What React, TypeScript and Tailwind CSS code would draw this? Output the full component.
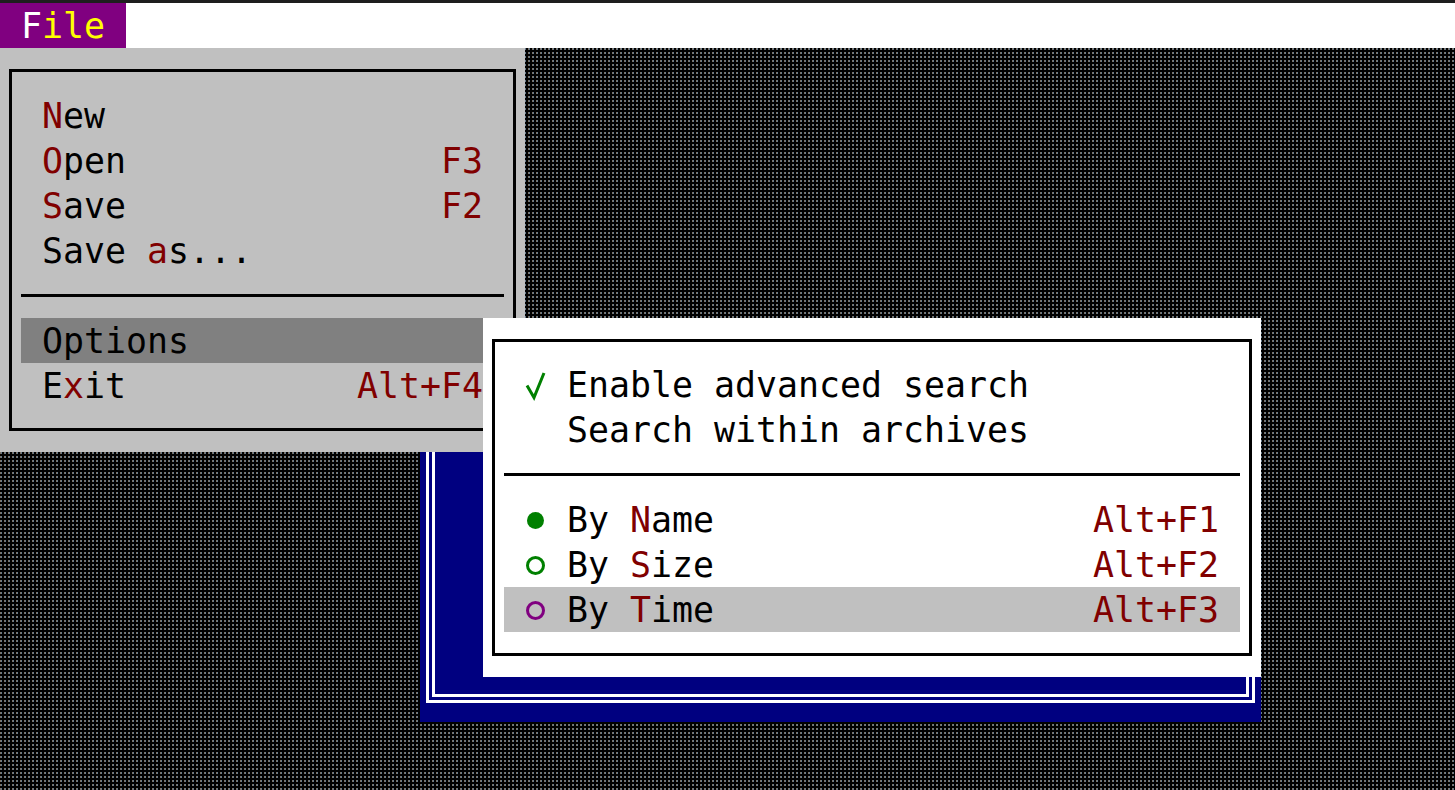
import React from "react";

const H = ({ children }: { children: React.ReactNode }) => (
  <span className="text-[#800000]">{children}</span>
);

function Row({
  children,
  right,
  className = "",
}: {
  children: React.ReactNode;
  right?: string;
  className?: string;
}) {
  return (
    <div className={"h-[45px] pt-[2px] flex items-center justify-between px-[21px] whitespace-pre " + className}>
      <span className="flex items-center">{children}</span>
      {right ? <span className="text-[#800000]">{right}</span> : null}
    </div>
  );
}

function Sep() {
  return (
    <div className="h-[45px] flex items-center">
      <div className="h-[3px] w-full bg-black" />
    </div>
  );
}

function Slot({ children }: { children?: React.ReactNode }) {
  return <span className="w-[42px] h-[45px] flex items-center">{children}</span>;
}

export default function App() {
  return (
    <div className="h-[790px] w-full overflow-hidden flex flex-col font-['DejaVu_Sans_Mono','Liberation_Mono',monospace] text-[34.9px] leading-[45px] text-black">
      <div className="h-[3px] bg-[#1e1e1e]" />
      <div className="h-[45px] bg-white flex">
        <div className="w-[126px] h-[45px] pt-[1px] bg-[#800080] text-[#ffff00] px-[21px] whitespace-pre">
          <span className="text-white">F</span>ile
        </div>
      </div>
      <div className="relative flex-1 bg-black bg-[linear-gradient(to_bottom,transparent_2px,#000_2px),linear-gradient(to_right,#7c7266_1px,#66798a_1px,#66798a_2px,#000_2px)] bg-[length:4px_4px]">
        {/* Blue window behind the menus */}
        <div className="absolute left-[420px] top-[315px] w-[841px] h-[359px] bg-[#000080] px-[6px] pb-[19px]">
          <div className="h-full border-[3px] border-t-0 border-white px-[3px] pb-[3px]">
            <div className="h-full border-[3px] border-t-0 border-white" />
          </div>
        </div>

        {/* File menu */}
        <div className="absolute left-0 top-0 w-[525px] h-[404px] bg-[#c0c0c0] pt-[21px] pl-[9px] pr-[9px]">
          <div className="h-[362px] border-[3px] border-black pt-[21px] pl-[9px] pr-[9px]">
            <Row><H>N</H>ew</Row>
            <Row right="F3"><H>O</H>pen</Row>
            <Row right="F2"><H>S</H>ave</Row>
            <Row>Save <H>a</H>s...</Row>
            <Sep />
            <Row className="bg-[#808080]">Options</Row>
            <Row right="Alt+F4">E<H>x</H>it</Row>
          </div>
        </div>

        {/* Options popup */}
        <div className="absolute left-[483px] top-[270px] w-[778px] h-[359px] bg-white pt-[21px] pl-[9px] pr-[9px]">
          <div className="h-[317px] border-[3px] border-black pt-[20px] pl-[9px] pr-[9px]">
            <Row>
              <Slot>
                <svg width="21" height="30" viewBox="0 0 21 30" className="text-[#008000]" fill="none" stroke="currentColor" strokeWidth="3">
                  <path d="M2 14.5 L9 26.5 L19 2" />
                </svg>
              </Slot>
              Enable advanced search
            </Row>
            <Row><Slot />Search within archives</Row>
            <Sep />
            <Row right="Alt+F1">
              <Slot><span className="ml-[2px] w-[17px] h-[17px] rounded-full bg-[#008000]" /></Slot>
              By <H>N</H>ame
            </Row>
            <Row right="Alt+F2">
              <Slot><span className="ml-[1px] w-[19px] h-[19px] rounded-full border-[3px] border-[#008000]" /></Slot>
              By <H>S</H>ize
            </Row>
            <Row right="Alt+F3" className="bg-[#c0c0c0]">
              <Slot><span className="ml-[1px] w-[19px] h-[19px] rounded-full border-[3px] border-[#800080]" /></Slot>
              By <H>T</H>ime
            </Row>
          </div>
        </div>
      </div>
    </div>
  );
}
